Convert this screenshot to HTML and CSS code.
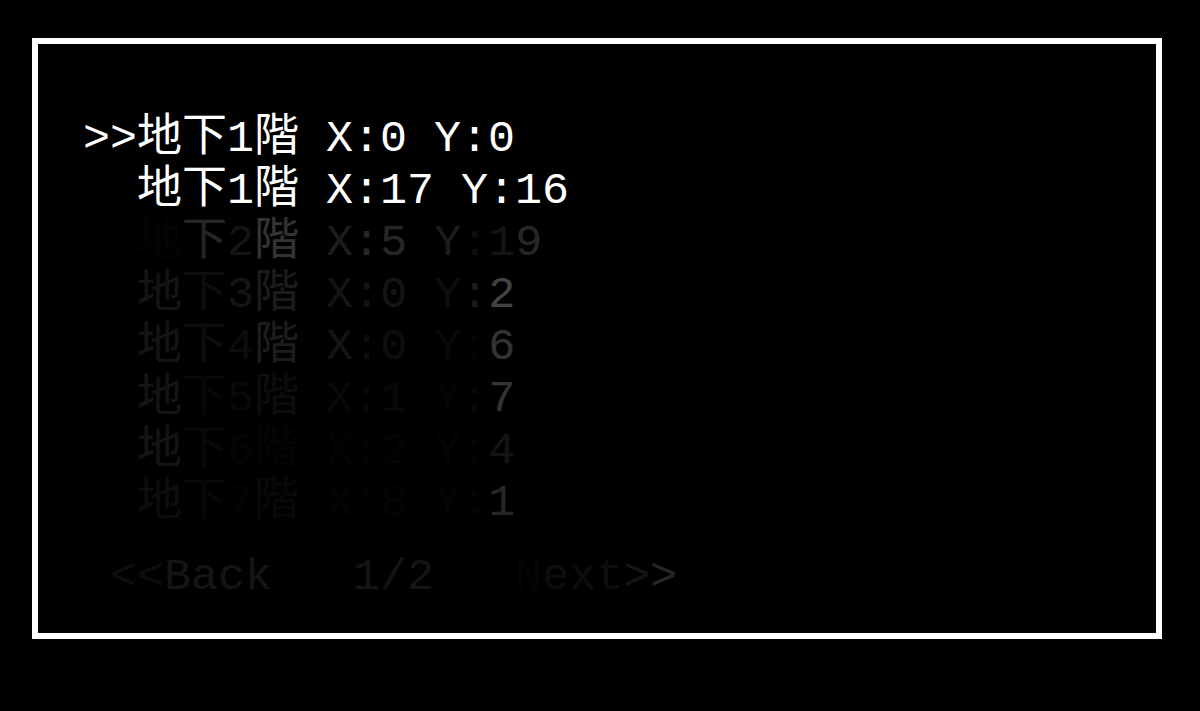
FILE: index.html
```html
<!DOCTYPE html>
<html lang="ja">
<head>
<meta charset="utf-8">
<title>Floor select</title>
<link rel="stylesheet" href="styles.css">
</head>
<body>
<div class="frame">
  <div class="menu">
    <div class="row">&gt;&gt;地下1階 X:0 Y:0</div>
    <div class="row">  地下1階 X:17 Y:16</div>
    <div class="row">  <span class="z">地</span><span class="a4">下</span><span class="a2">2</span><span class="a5">階</span> <span class="a3">X</span><span class="a4">:</span><span class="a4">5</span> <span class="a3">Y</span><span class="a1">:</span><span class="a2">1</span><span class="a4">9</span></div>
    <div class="row">  <span class="a2">地</span><span class="a1">下</span><span class="a2">3</span><span class="a3">階</span> <span class="a2">X</span><span class="a2">:</span><span class="a2">0</span> <span class="a1">Y</span><span class="a3">:</span><span class="a6">2</span></div>
    <div class="row">  <span class="a2">地</span><span class="a1">下</span><span class="a1">4</span><span class="a3">階</span> <span class="a2">X</span><span class="a1">:</span><span class="a1">0</span> <span class="a0">Y</span><span class="z">:</span><span class="a5">6</span></div>
    <div class="row">  <span class="a2">地</span><span class="a0">下</span><span class="a0">5</span><span class="a1">階</span> <span class="a0">X</span><span class="a0">:</span><span class="a0">1</span> <span class="z">Y</span><span class="a0">:</span><span class="a5">7</span></div>
    <div class="row">  <span class="a2">地</span><span class="a0">下</span><span class="z">6</span><span class="z">階</span> <span class="z">X</span><span class="z">:</span><span class="z">2</span> <span class="z">Y</span><span class="z">:</span><span class="a2">4</span></div>
    <div class="row">  <span class="a1">地</span><span class="a0">下</span><span class="z">7</span><span class="a0">階</span> <span class="z">X</span><span class="z">:</span><span class="z">8</span> <span class="z">Y</span><span class="z">:</span><span class="a4">1</span></div>
  </div>
  <div class="pager"> <span class="a1">&lt;&lt;</span><span class="a2">Back</span>   <span class="a2">1/2</span>   <span class="z">N</span><span class="a1">ext</span><span class="a2">&gt;</span><span class="a4">&gt;</span></div>
</div>
</body>
</html>
```
FILE: styles.css
```css
html, body {
  margin: 0;
  padding: 0;
  background: #000;
}

body {
  width: 1200px;
  height: 711px;
  overflow: hidden;
}

.frame {
  box-sizing: border-box;
  width: 1130px;
  height: 601px;
  margin: 38px 0 0 32px;
  border: 6px solid #fff;
  padding: 70px 0 0 45px;
  color: #fff;
  font-family: "Liberation Mono", "Noto Sans CJK JP", monospace;
  font-size: 45px;
  line-height: 52px;
}

.menu {
  display: flex;
  flex-direction: column;
}

.row,
.pager {
  white-space: pre;
}

.pager {
  margin-top: 22px;
}

.z  { opacity: 0.015; }
.a0 { opacity: 0.03; }
.a1 { opacity: 0.05; }
.a2 { opacity: 0.08; }
.a3 { opacity: 0.11; }
.a4 { opacity: 0.15; }
.a5 { opacity: 0.2; }
.a6 { opacity: 0.26; }
```
